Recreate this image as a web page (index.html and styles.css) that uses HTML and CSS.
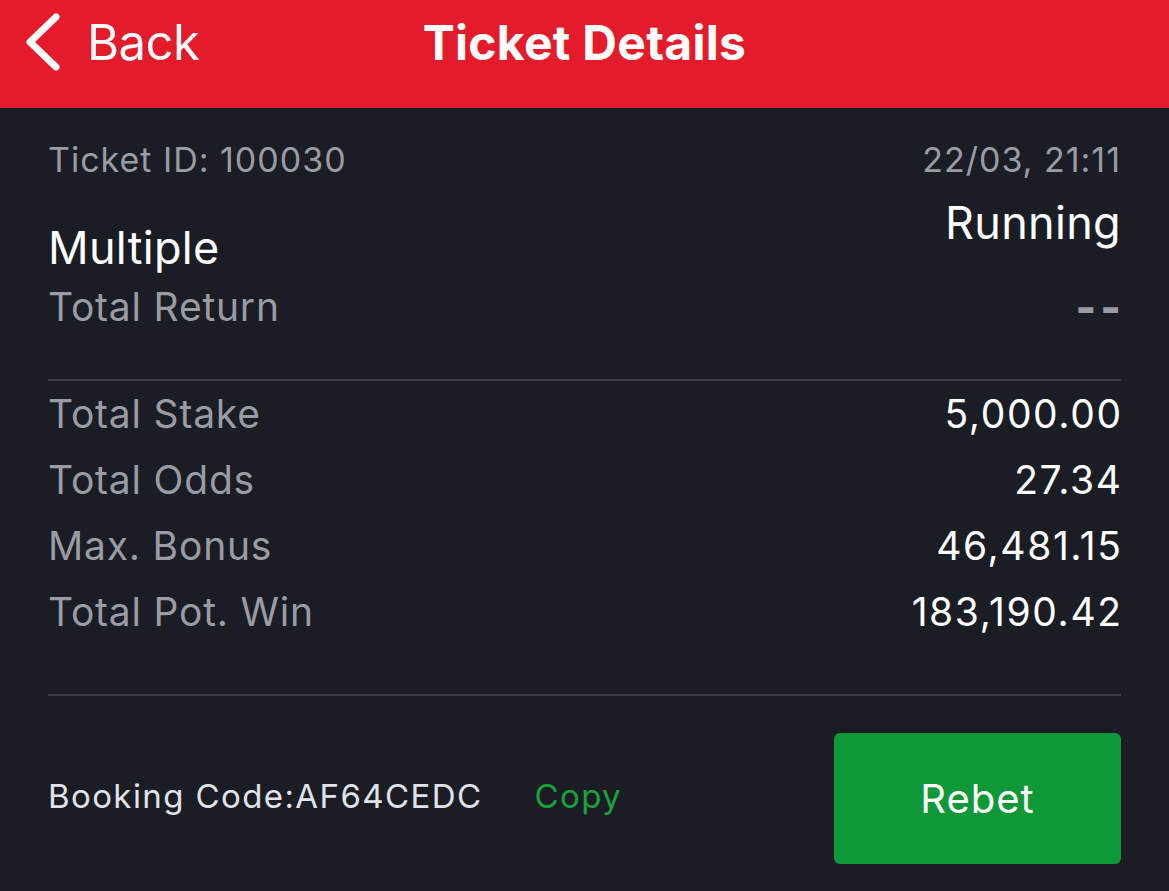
FILE: index.html
```html
<!DOCTYPE html>
<html>
<head>
<meta charset="utf-8">
<link rel="stylesheet" href="styles.css">
</head>
<body>
<div class="header">
  <div class="back">
    <svg class="chev" width="40" height="60" viewBox="0 0 40 60"><polyline points="30,4 4,29 30,54" fill="none" stroke="#fff" stroke-width="7" stroke-linecap="round" stroke-linejoin="round"/></svg>
    <span class="back-text">Back</span>
  </div>
  <div class="title">Ticket Details</div>
  <div></div>
</div>
<div class="content">
  <div class="row meta">
    <span>Ticket ID: 100030</span>
    <span>22/03, 21:11</span>
  </div>
  <div class="row status">
    <span class="type">Multiple</span>
    <span class="state">Running</span>
  </div>
  <div class="row ret">
    <span>Total Return</span>
    <span class="dash">--</span>
  </div>
  <div class="divider first"></div>
  <div class="row detail"><span class="label">Total Stake</span><span class="value">5,000.00</span></div>
  <div class="row detail"><span class="label">Total Odds</span><span class="value">27.34</span></div>
  <div class="row detail"><span class="label">Max. Bonus</span><span class="value">46,481.15</span></div>
  <div class="row detail"><span class="label">Total Pot. Win</span><span class="value">183,190.42</span></div>
  <div class="divider second"></div>
  <div class="row footer">
    <div class="booking"><span class="code">Booking Code:AF64CEDC</span><span class="copy">Copy</span></div>
    <div class="rebet">Rebet</div>
  </div>
</div>
</body>
</html>
```
FILE: styles.css
```css
html, body {
  margin: 0;
  padding: 0;
  background: #1b1d25;
  font-family: Inter, "Liberation Sans", sans-serif;
}
body {
  width: 1169px;
  height: 891px;
  overflow: hidden;
}
.header {
  height: 108px;
  background: #e41b2a;
  display: grid;
  grid-template-columns: 1fr auto 1fr;
  align-items: center;
  padding-bottom: 22px;
  box-sizing: border-box;
  color: #fff;
}
.back {
  display: flex;
  align-items: center;
  padding-left: 26px;
  gap: 21px;
}
.chev {
  display: block;
}
.back-text {
  font-size: 49px;
  line-height: 60px;
  letter-spacing: -0.5px;
}
.title {
  font-size: 48px;
  font-weight: 700;
  line-height: 60px;
  letter-spacing: 0.3px;
}
.content {
  padding: 27px 48px 0 48px;
}
.row {
  display: flex;
  justify-content: space-between;
}
.meta {
  font-size: 34px;
  line-height: 50px;
  color: #9a9ca4;
  letter-spacing: 1px;
}
.status {
  margin-top: 10px;
  align-items: flex-start;
  color: #fff;
  font-size: 45px;
  line-height: 56px;
  letter-spacing: 0.3px;
}
.type {
  margin-top: 25px;
}
.ret {
  margin-top: 3px;
  font-size: 39px;
  line-height: 56px;
  color: #9a9ca4;
  letter-spacing: 0.8px;
}
.dash {
  font-weight: 800;
  font-size: 44px;
  letter-spacing: 4px;
  margin-right: -4px;
}
.divider {
  height: 2px;
  background: #3b3d45;
}
.divider.first {
  margin-top: 44px;
}
.divider.second {
  margin-top: 49px;
}
.detail {
  font-size: 39px;
  line-height: 66px;
}
.label {
  color: #9a9ca4;
  letter-spacing: 0.8px;
}
.value {
  color: #fff;
  letter-spacing: 1.6px;
  margin-right: -1.6px;
}
.footer {
  margin-top: 37px;
  align-items: center;
}
.booking {
  display: flex;
  align-items: center;
  gap: 52px;
  font-size: 33px;
  line-height: 40px;
  margin-top: -6px;
  letter-spacing: 1.4px;
}
.code {
  color: #e2e2ea;
}
.copy {
  color: #1aa23c;
}
.rebet {
  width: 287px;
  height: 131px;
  border-radius: 6px;
  background: #0e9838;
  color: #fff;
  font-size: 40px;
  letter-spacing: 1px;
  display: flex;
  align-items: center;
  justify-content: center;
}
```
